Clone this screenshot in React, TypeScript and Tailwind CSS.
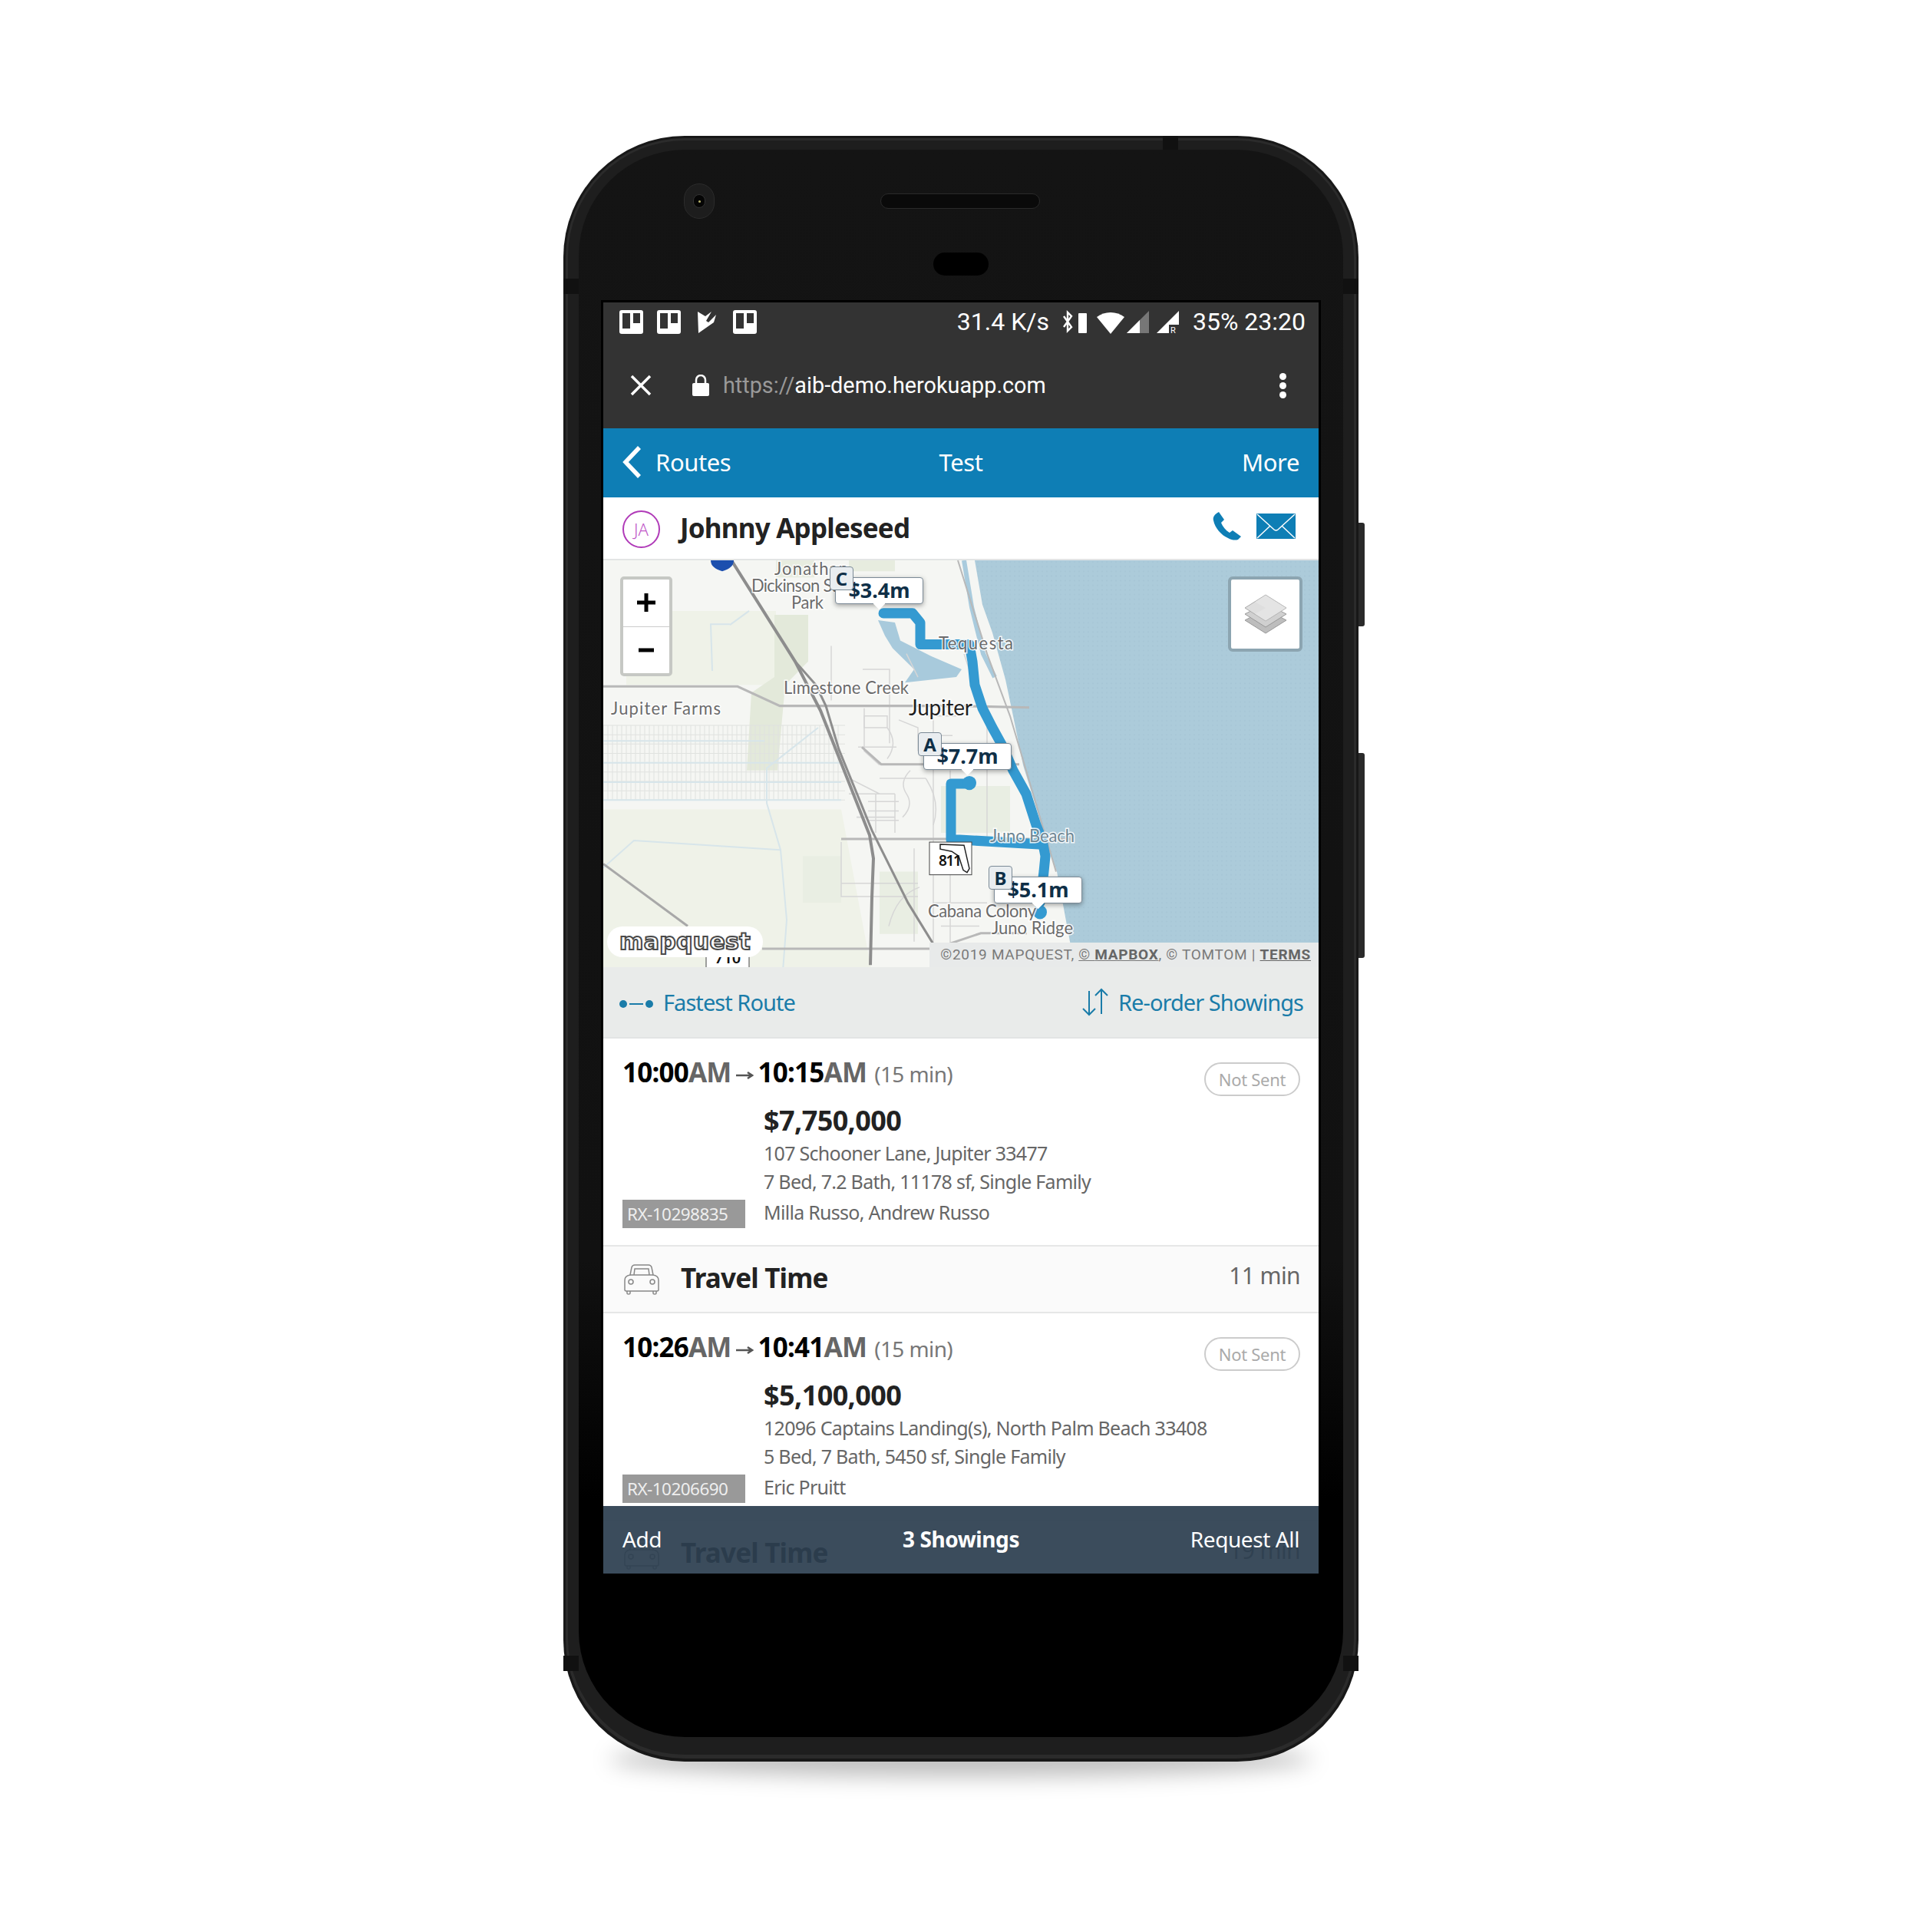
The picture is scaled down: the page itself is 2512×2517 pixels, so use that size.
const ui = "font-['Noto_Sans',sans-serif]";

function TrelloIcon() {
  return (
    <svg width="31" height="31" viewBox="0 0 31 31">
      <rect width="31" height="31" rx="3" fill="#fff" />
      <rect x="4" y="4" width="10" height="20" fill="#333" />
      <rect x="18" y="4" width="9" height="13" fill="#333" />
    </svg>
  );
}

function StatusIcons() {
  return (
    <svg width="151" height="32" viewBox="0 0 151 32" fill="#fff">
      {/* bluetooth + battery */}
      <path d="M1 9l10 14-5 5V4l5 5L1 23" fill="none" stroke="#fff" strokeWidth="2.4" />
      <rect x="20" y="5" width="11" height="26" rx="1" />
      {/* wifi */}
      <path d="M44 10c10-8 26-8 36 0L62 32z" />
      {/* signal */}
      <path d="M83 31L112 2v29z" fill="#777" />
      <path d="M83 31l17-17v17z" />
      <path d="M122 31L151 2v18h-13v11z" />
      <text x="140" y="31" fontSize="11" fontFamily="Roboto" fill="#fff">R</text>
    </svg>
  );
}

function PhoneIcon() {
  return (
    <svg width="37" height="37" viewBox="0 0 37 37" fill="#0e7eb5">
      <path d="M8 0l7 10-4 4c2 5 6 10 11 13l4-3 11 8-4 4c-3 1-8 1-13-2C11 30 3 21 1 11 0 7 2 3 8 0z" />
    </svg>
  );
}

function MailIcon() {
  return (
    <svg width="51" height="33" viewBox="0 0 51 33">
      <rect width="51" height="33" rx="1" fill="#0e7eb5" />
      <path d="M1 1l22 20q2.500 2 5 0L50 1M1 32l17-16M50 32L33 16" fill="none" stroke="#fff" strokeWidth="1.500" />
    </svg>
  );
}

function CarIcon() {
  return (
    <svg width="46" height="40" viewBox="0 0 46 40" fill="none" stroke="#888" strokeWidth="1.500">
      <path d="M8 14l2-10q1-3 4-3h18q3 0 4 3l2 10q7 1 7 7v12q0 2-2 2H3q-2 0-2-2V21q0-6 7-7z" />
      <path d="M8 14h30M13 14l1-8h18l1 8" />
      <circle cx="9" cy="23" r="3" />
      <circle cx="37" cy="23" r="3" />
      <path d="M4 35v3q0 1 2 1t2-1v-3M38 35v3q0 1 2 1t2-1v-3" />
    </svg>
  );
}

function Marker({ letter, price, className }: { letter: string; price: string; className: string }) {
  return (
    <div className={`absolute w-[115px] h-[35px] ${className}`}>
      <div className="flex items-center justify-center w-full h-full bg-white rounded-[4px] border border-[#7b8a96] shadow-[0_2px_6px_rgba(0,0,0,0.35)] text-[27px] font-bold text-[#0f2f47]">
        {price}
      </div>
      <div className="absolute left-[52px] top-[29px] w-[11px] h-[11px] bg-white rotate-45" />
      <div className="absolute -left-[7px] -top-[14px] flex items-center justify-center w-[31px] h-[31px] bg-[#e9edf0] rounded-[4px] border border-[#7b8a96] text-[24px] font-bold text-[#0f2f47]">
        {letter}
      </div>
    </div>
  );
}

const farmRows = [212, 224, 236, 248, 260, 272, 284, 296, 308];
const farmCols = Array.from({ length: 52 }, (_, i) => i * 6);

function MapArt() {
  const label = "font-['Lato',sans-serif]";
  const halo = { paintOrder: "stroke" as const, stroke: "rgba(255,255,255,0.85)", strokeWidth: 3 };
  return (
    <svg className="absolute inset-0" width="932" height="530" viewBox="0 0 932 530">
      <defs>
        <pattern id="sea" width="6" height="6" patternUnits="userSpaceOnUse">
          <rect width="6" height="6" fill="#accbda" />
          <circle cx="2" cy="2" r="1" fill="#a7c6d6" />
        </pattern>
      </defs>
      <rect width="932" height="530" fill="#f5f6f3" />
      <g transform="scale(1 1.014)">
        {/* vegetation */}
        <path d="M30 65h195v95H30zM0 320h310l40 210H0z" fill="#eff2e8" />
        <path d="M223 70h44v60l-30 30-10 110h-40l6-100 30-20z" fill="#e3e9da" />
        <path d="M225 0h50v22h-50zM320 0h60v14h-60z" fill="#e7ecdf" />
        <path d="M260 380h50v60h-50zM360 400h50v80h-50zM440 290h90v60h-90z" fill="#e9eee3" />
        {/* ocean */}
        <path d="M484 0L494 57 507 93 524 153 534 200 547 263 571 340 591 400 609 495V530H932V0z" fill="url(#sea)" />
        {/* lagoon + intracoastal */}
        <path d="M358 77l22 3 7 23 40 20 40 17-7 10-67 7 12-17-28-27-10-16z" fill="#a8cadc" />
        <path d="M470 0l10 60 15 60 15 30" fill="none" stroke="#a9cbdd" strokeWidth="6" />
        {/* farm grid */}
        <g stroke="#e0e2df" strokeWidth="1">
          {farmRows.map((y) => (
            <path key={y} d="M0 0h315" transform={`translate(0 ${y})`} />
          ))}
          {farmCols.map((x) => (
            <path key={x} d={`M${x} 212v96`} />
          ))}
        </g>
        <g fill="none" stroke="#d7e5ea" strokeWidth="2">
          <path d="M0 232h210M0 260h310M0 285h310M0 308h310" />
          <path d="M280 215l-67 52v45l18 60 8 90-5 65" />
          <path d="M0 395l40-35 190 12" />
          <path d="M165 82l-25 0 2 60M190 65l-25 18" />
        </g>
        {/* suburban roads */}
        <g fill="none" stroke="#d6d6d6" strokeWidth="1.500">
          <path d="M338 140h35v95M297 110v70M340 190v55l20 18M430 200v290M405 370v120M452 270v230" />
          <path d="M310 362v70h100M310 415h100M372 470q10-40 40-50M500 190v170M470 120l20 60" />
          <path d="M332 240h50M320 300h60M330 330h50M360 280h60M370 215q15 20 0 40M320 280l40 20M420 280q20 30 10 60" />
          <path d="M395 120l15 30M340 200h30v15h-30zM380 300v50M355 300v50M345 310h40M345 322h40M345 334h40" />
          <path d="M400 270q-15 15-5 30t-5 30M385 205l25 10v30M420 200h40M420 225h35M430 440h70M440 470h50" />
        </g>
        <g fill="none" stroke="#b8b8b8" strokeWidth="3">
          <path d="M0 162h175l55 25h230l95 2" />
          <path d="M337 240l25 22h180" />
          <path d="M310 358h300" />
          <path d="M207 499h225l60-20h60" />
          <path d="M0 390l110 80" stroke="#a8a8a8" />
          <path d="M462 0l38 120 30 80 30 100 30 100" strokeWidth="2" />
        </g>
        {/* highways */}
        <g fill="none" stroke="#8d8d8d">
          <path d="M167 0l83 130 33 63 64 160 5 30-2 50-2 87" strokeWidth="4" />
          <path d="M250 130l27 30 13 27 17 56 43 104 47 93 33 53" strokeWidth="3" />
        </g>
        <path d="M140 0h30q0 10-15 14Q140 10 140 0z" fill="#1c4fae" />
        {/* route */}
        <g fill="none" stroke="#349ad1" strokeWidth="13" strokeLinejoin="round" strokeLinecap="round">
          <path d="M365 68h38l10 12v28h64l4 22 3 30 10 30 13 25 14 25 13 30 17 30 13 40 8 20 4 20-2 20-5 40" />
          <path d="M572 365L464 359h-11v-72h24" />
        </g>
        <circle cx="569" cy="452" r="9" fill="#349ad1" />
        <circle cx="477" cy="286" r="9" fill="#349ad1" />
        {/* place names */}
        <g className={label} fill="#6b6b6b" fontSize="22" style={halo}>
          <text x="223" y="19" textLength="96">Jonathan</text>
          <text x="193" y="40" textLength="140">Dickinson State</text>
          <text x="245" y="62" textLength="42">Park</text>
          <text x="235" y="172" textLength="163">Limestone Creek</text>
          <text x="10" y="198" textLength="143">Jupiter Farms</text>
          <text x="437" y="114" textLength="97">Tequesta</text>
          <text x="504" y="362" textLength="110" fill="#6f8794">Juno Beach</text>
          <text x="423" y="459" textLength="141">Cabana Colony</text>
          <text x="506" y="480" textLength="106">Juno Ridge</text>
        </g>
        <text className={label} x="398" y="199" fontSize="28" fill="#1f1f1f" textLength="83" style={halo}>Jupiter</text>
        {/* road shields */}
        <rect x="425" y="362" width="55" height="42" fill="#fff" stroke="#444" />
        <path d="M439 365l31 1 7 30-3 5-5-3-6-18-9-6-15-3z" fill="none" stroke="#222" strokeWidth="1.500" />
        <text className="font-['Noto_Sans',sans-serif]" x="437" y="393" fontSize="19" fontWeight="600" fill="#111" textLength="30">811</text>
        <path d="M134 525v-30h56v30" fill="#fff" stroke="#444" />
        <text className="font-['Noto_Sans',sans-serif]" x="145" y="518" fontSize="20" fontWeight="600" fill="#111">710</text>
      </g>
    </svg>
  );
}

function RouteMap() {
  return (
    <div className="relative h-[530px] shrink-0 overflow-hidden">
      <MapArt />
      {/* zoom buttons */}
      <div className="absolute left-[22px] top-[21px] w-[68px] h-[130px] flex flex-col bg-white rounded-[5px] border-[4px] border-[#c6c8c4] text-black font-bold">
        <div className="flex-1 flex items-center justify-center border-b border-[#ccc]">
          <svg width="24" height="24" viewBox="0 0 24 24"><path d="M0 12h24M12 0v24" stroke="#000" strokeWidth="5" /></svg>
        </div>
        <div className="flex-1 flex items-center justify-center">
          <svg width="20" height="8" viewBox="0 0 20 8"><path d="M0 4h20" stroke="#000" strokeWidth="5" /></svg>
        </div>
      </div>
      {/* layers */}
      <div className="absolute left-[814px] top-[21px] w-[97px] h-[98px] flex items-center justify-center bg-white rounded-[6px] border-[4px] border-[#8ca5b1]">
        <svg width="56" height="52" viewBox="0 0 56 52">
          <path d="M1 34L28 20l27 14-27 17z" fill="#bdbdbd" stroke="#999" />
          <path d="M1 26L28 12l27 14-27 17z" fill="#d0d0d0" stroke="#999" />
          <path d="M1 18L28 1l27 17-27 17z" fill="#dedede" stroke="#aaa" />
          <path d="M14 10L28 1l27 17-27 17-14-9 14-8z" fill="#eee" fillOpacity="0.4" />
        </svg>
      </div>
      <Marker letter="C" price="$3.4m" className="left-[302px] top-[22px]" />
      <Marker letter="A" price="$7.7m" className="left-[417px] top-[238px]" />
      <Marker letter="B" price="$5.1m" className="left-[509px] top-[412px]" />
      {/* mapquest logo */}
      <div className="absolute left-[5px] top-[477px] w-[203px] h-[40px] flex items-center justify-center rounded-full bg-white">
        <span className="font-['DejaVu_Sans',sans-serif] font-bold text-[30px] leading-none tracking-[0.3px] text-white [-webkit-text-stroke:2px_#4a4a4a]">mapquest</span>
      </div>
      {/* attribution */}
      <div className="absolute right-0 bottom-0 w-[507px] h-[32px] flex items-center justify-end pr-[10px] bg-[#e8eaea] font-['Roboto',sans-serif] text-[19px] tracking-[0.7px] text-[#7a7a7a] whitespace-nowrap">
        ©2019 MAPQUEST,&nbsp;<span className="underline"><span>© </span><b className="text-[#666]">MAPBOX</b></span>, © TOMTOM |&nbsp;<b className="underline text-[#666]">TERMS</b>
      </div>
    </div>
  );
}

function Clock({ from, to }: { from: string; to: string }) {
  return (
    <div className="flex items-baseline mt-[1px] whitespace-nowrap">
      <span className="text-[35px] leading-none font-bold tracking-[-0.8px] text-black">{from}</span>
      <span className="text-[35px] leading-none font-bold tracking-[-0.8px] text-[#666]">AM</span>
      <svg className="mx-[6px] self-center mt-[8px]" width="23" height="12" viewBox="0 0 23 12"><path d="M0 6h20M15 2l6 4-6 4" fill="none" stroke="#555" strokeWidth="2.500" /></svg>
      <span className="text-[35px] leading-none font-bold tracking-[-0.8px] text-black">{to}</span>
      <span className="text-[35px] leading-none font-bold tracking-[-0.8px] text-[#666]">AM</span>
      <span className="ml-[10px] text-[28px] leading-none tracking-[-0.6px] text-[#777]">(15 min)</span>
    </div>
  );
}

function ShowingCard({ from, to, price, address, specs, agents, mls }: { from: string; to: string; price: string; address: string; specs: string; agents: string; mls: string }) {
  return (
    <div className="relative h-[271px] shrink-0 bg-white pl-[25px] pr-[24px] pt-[25px] border-b-2 border-[#e6e7e7]">
      <div className="flex items-start justify-between">
        <Clock from={from} to={to} />
        <div className="flex items-center justify-center w-[125px] h-[44px] mt-[6px] rounded-full border-2 border-[#ccc] text-[22px] tracking-[-0.3px] text-[#aaa]">Not Sent</div>
      </div>
      <div className="ml-[184px] mt-[9px] text-[36px] leading-[46px] font-bold tracking-[-0.6px] text-[#222]">{price}</div>
      <div className="ml-[184px] text-[25px] leading-[38px] tracking-[-0.72px] text-[#666] whitespace-nowrap">{address}</div>
      <div className="ml-[184px] text-[25px] leading-[37px] tracking-[-0.72px] text-[#666] whitespace-nowrap">{specs}</div>
      <div className="flex items-start mt-[2px]">
        <div className="flex items-center w-[160px] h-[37px] mt-[3px] pl-[6px] bg-[#999] text-[22.5px] tracking-[-0.55px] text-[#eee]">{mls}</div>
        <div className="ml-[24px] text-[25px] leading-[38px] tracking-[-0.72px] text-[#666] whitespace-nowrap">{agents}</div>
      </div>
    </div>
  );
}

function TravelRow({ mins }: { mins: string }) {
  return (
    <div className="h-[87px] shrink-0 flex items-center bg-[#fafafa] pl-[27px] pr-[24px] border-b-2 border-[#e6e7e7]">
      <CarIcon />
      <span className="ml-[28px] -mt-[2px] text-[35px] font-bold tracking-[-0.8px] text-[#222]">Travel Time</span>
      <span className="ml-auto -mt-[10px] text-[30px] tracking-[-0.6px] text-[#666]">{mins}</span>
    </div>
  );
}

function Screen() {
  return (
    <div className={`relative h-[1656px] flex flex-col overflow-hidden ${ui}`}>
      {/* android chrome */}
      <div className="h-[164px] shrink-0 bg-[#333] font-['Roboto',sans-serif] text-white">
        <div className="flex items-center h-[50px] pl-[21px] pr-[17px]">
          <TrelloIcon />
          <div className="ml-[18px]"><TrelloIcon /></div>
          <svg className="ml-[22px]" width="26" height="30" viewBox="0 0 26 30" fill="#fff">
            <path d="M0 2l10 6 8-6-7 12 3 2 10-10-3 10L1 30z" />
          </svg>
          <div className="ml-[20px]"><TrelloIcon /></div>
          <span className="ml-auto text-[32px] leading-none">31.4 K/s</span>
          <div className="ml-[18px]"><StatusIcons /></div>
          <span className="ml-[18px] text-[32px] leading-none">35% 23:20</span>
        </div>
        <div className="flex items-center h-[66px] mt-[25px] pl-[35px] pr-[42px]">
          <svg width="28" height="28" viewBox="0 0 28 28"><path d="M2 2l24 24M26 2L2 26" stroke="#fff" strokeWidth="3.500" /></svg>
          <svg className="ml-[53px]" width="22" height="28" viewBox="0 0 22 28" fill="#fff">
            <path d="M5 12V7a6 6 0 0 1 12 0v5" fill="none" stroke="#fff" strokeWidth="2.500" />
            <rect y="11" width="22" height="17" rx="2" />
          </svg>
          <span className="ml-[18px] text-[28.8px] leading-none"><span className="text-[#999]">https://</span>aib-demo.herokuapp.com</span>
          <div className="ml-auto flex flex-col gap-[3px]">
            <span className="w-[9px] h-[9px] rounded-full bg-white" />
            <span className="w-[9px] h-[9px] rounded-full bg-white" />
            <span className="w-[9px] h-[9px] rounded-full bg-white" />
          </div>
        </div>
      </div>
      {/* header */}
      <div className="grid grid-cols-3 items-center h-[90px] shrink-0 bg-[#0e7eb5] pl-[25px] pr-[25px] pb-[2px] text-[31px] tracking-[-0.4px] text-white">
        <div className="flex items-center">
          <svg width="25" height="42" viewBox="0 0 25 42"><path d="M22 2L4 21l18 19" fill="none" stroke="#fff" strokeWidth="5.500" /></svg>
          <span className="ml-[18px]">Routes</span>
        </div>
        <div className="text-center">Test</div>
        <div className="text-right">More</div>
      </div>
      {/* contact */}
      <div className="flex items-center h-[82px] shrink-0 bg-white pl-[25px] pr-[30px] border-t-2 border-[#fff] border-b-2 border-b-[#e3e5e5]">
        <div className="flex items-center justify-center w-[49px] h-[49px] rounded-full border-2 border-[#b03ab8] text-[22px] font-light text-[#c158c8]">JA</div>
        <span className="ml-[26px] -mt-[2px] text-[35px] font-bold tracking-[-0.8px] text-[#222]">Johnny Appleseed</span>
        <div className="ml-auto flex items-center gap-[20px] -mt-[8px]">
          <PhoneIcon />
          <MailIcon />
        </div>
      </div>
      <RouteMap />
      {/* route options */}
      <div className="flex items-center justify-between h-[93px] shrink-0 bg-[#e9ebea] pl-[21px] pr-[20px] text-[29px] tracking-[-0.95px] text-[#1a7ca9] border-b-2 border-[#e2e4e4]">
        <div className="flex items-center">
          <svg width="44" height="12" viewBox="0 0 44 12" className="mt-[4px]"><circle cx="5" cy="6" r="5" fill="#1a7ca9" /><circle cx="39" cy="6" r="5" fill="#1a7ca9" /><path d="M13 6h18" stroke="#1a7ca9" strokeWidth="2" /></svg>
          <span className="ml-[13px]">Fastest Route</span>
        </div>
        <div className="flex items-center">
          <svg width="38" height="37" viewBox="0 0 38 37" fill="none" stroke="#1a7ca9" strokeWidth="2"><path d="M11 4v31M3 27l8 8 8-8M27 34V2M19 10l8-8 8 8" /></svg>
          <span className="ml-[11px]">Re-order Showings</span>
        </div>
      </div>
      <ShowingCard from="10:00" to="10:15" price="$7,750,000" address="107 Schooner Lane, Jupiter 33477" specs="7 Bed, 7.2 Bath, 11178 sf, Single Family" agents="Milla Russo, Andrew Russo" mls="RX-10298835" />
      <TravelRow mins="11 min" />
      <ShowingCard from="10:26" to="10:41" price="$5,100,000" address="12096 Captains Landing(s), North Palm Beach 33408" specs="5 Bed, 7 Bath, 5450 sf, Single Family" agents="Eric Pruitt" mls="RX-10206690" />
      <TravelRow mins="19 min" />
      {/* footer overlays the list */}
      <div className="absolute left-0 right-0 bottom-0 h-[88px] grid grid-cols-3 items-center bg-[#2c3e50]/[0.93] px-[25px] pb-[2px] text-[28px] tracking-[-0.4px] text-white">
        <span>Add</span>
        <span className="text-center font-bold">3 Showings</span>
        <span className="text-right">Request All</span>
      </div>
    </div>
  );
}

export default function App() {
  return (
    <div className="w-[2512px] h-[2517px] bg-white overflow-hidden pt-[177px] pl-[734px]">
      <div className="relative w-[1036px] h-[2118px]">
        {/* floor shadow */}
        <div className="absolute left-[60px] right-[60px] -bottom-[20px] h-[46px] rounded-[50%] bg-black/25 blur-[14px]" />
        {/* side buttons */}
        <div className="absolute -right-[8px] top-[504px] w-[12px] h-[135px] rounded-[3px] bg-[#2a2a2a]" />
        <div className="absolute -right-[8px] top-[804px] w-[12px] h-[267px] rounded-[3px] bg-[#2a2a2a]" />
        <div className="relative h-full p-[3px] pb-[4px] rounded-[158px] bg-[#181818]">
          <div className="h-full p-[3px] pb-[5px] rounded-[155px] bg-[#2b2b2b]">
            <div className="h-full px-[14px] pt-[12px] pb-[23px] rounded-[152px] bg-[#1e1e1e]">
              <div className="h-full px-[29px] rounded-[138px] bg-[linear-gradient(180deg,#141414_0%,#111_70%,#000_85%)] overflow-hidden">
                <div className="flex items-center h-[134px]">
                  <div className="ml-[108px] flex items-center justify-center w-[40px] h-[46px] rounded-full bg-[#1d1d1d] border border-[#2c2c2c]">
                    <span className="flex items-center justify-center w-[16px] h-[18px] rounded-full bg-[#050505] border border-[#333]">
                      <span className="w-[3px] h-[3px] rounded-full bg-[#b7b36a]" />
                    </span>
                  </div>
                  <div className="ml-[216px] w-[208px] h-[20px] rounded-full bg-[#0a0a0a] border border-[#2a2a2a]" />
                </div>
                <div className="flex justify-center h-[62px]">
                  <div className="w-[72px] h-[30px] rounded-full bg-black" />
                </div>
                <div className="border-[3px] border-b-0 border-black">
                  <Screen />
                </div>
              </div>
            </div>
          </div>
        </div>
        {/* antenna lines */}
        <div className="absolute left-[781px] top-0 w-[20px] h-[18px] bg-[#111]" />
        <div className="absolute left-0 top-[186px] w-[20px] h-[20px] bg-[#111]" />
        <div className="absolute right-0 top-[186px] w-[20px] h-[20px] bg-[#111]" />
        <div className="absolute left-0 top-[1980px] w-[20px] h-[20px] bg-[#111]" />
        <div className="absolute right-0 top-[1980px] w-[20px] h-[20px] bg-[#111]" />
      </div>
    </div>
  );
}
